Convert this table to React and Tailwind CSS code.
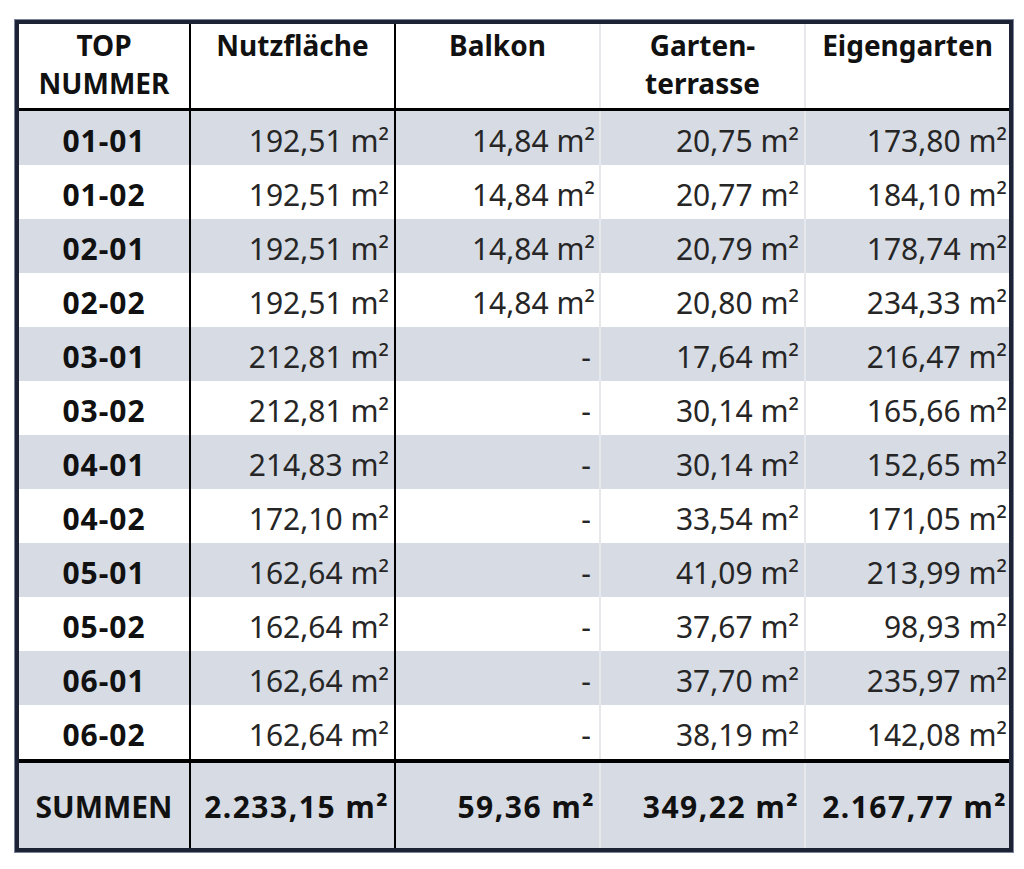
const rows = [
  ['01-01', '192,51', '14,84', '20,75', '173,80'],
  ['01-02', '192,51', '14,84', '20,77', '184,10'],
  ['02-01', '192,51', '14,84', '20,79', '178,74'],
  ['02-02', '192,51', '14,84', '20,80', '234,33'],
  ['03-01', '212,81', null, '17,64', '216,47'],
  ['03-02', '212,81', null, '30,14', '165,66'],
  ['04-01', '214,83', null, '30,14', '152,65'],
  ['04-02', '172,10', null, '33,54', '171,05'],
  ['05-01', '162,64', null, '41,09', '213,99'],
  ['05-02', '162,64', null, '37,67', '98,93'],
  ['06-01', '162,64', null, '37,70', '235,97'],
  ['06-02', '162,64', null, '38,19', '142,08'],
]

// column widths + the line on the right of each cell
const cols = [
  'w-[172px] border-r-2 border-black',
  'w-[205px] border-r-2 border-black',
  'w-[205px] border-r-2 border-[#e6e8ec]',
  'w-[205px] border-r-2 border-[#e6e8ec]',
  'w-[203px]',
]

function Value({ v }) {
  if (v === null) return <span className="pr-[4px]">-</span>
  return <span>{v} m²</span>
}

export default function App() {
  return (
    <div className="min-h-[869px] bg-white pt-[20px] pl-[15px] font-['Noto_Sans',sans-serif] text-[#262626]">
      <div className="w-[998px] border-[4px] border-[#1d2335] shadow-[0_0_0_1px_#7a849c]">
        {/* header */}
        <div className="flex h-[87px] border-b-[3px] border-black bg-white text-[28px] font-bold leading-[38px] text-[#111]">
          <div className={`${cols[0]} text-center pt-[2px]`}>TOP<br />NUMMER</div>
          <div className={`${cols[1]} text-center pt-[2px]`}>Nutzfläche</div>
          <div className={`${cols[2]} text-center pt-[2px]`}>Balkon</div>
          <div className={`${cols[3]} text-center pt-[2px]`}>Garten-<br />terrasse</div>
          <div className={`${cols[4]} text-center pt-[2px]`}>Eigengarten</div>
        </div>

        {/* rows */}
        {rows.map((r, i) => (
          <div
            key={r[0]}
            className={`flex h-[54px] text-[30px] ${i % 2 === 0 ? 'bg-[#d6dbe4]' : 'bg-white'}`}
          >
            <div className={`${cols[0]} flex items-center justify-center pt-[4px] font-bold tracking-[1px] text-[#111]`}>{r[0]}</div>
            <div className={`${cols[1]} flex items-center justify-end pt-[4px] pr-[5px]`}><Value v={r[1]} /></div>
            <div className={`${cols[2]} flex items-center justify-end pt-[4px] pr-[4px]`}><Value v={r[2]} /></div>
            <div className={`${cols[3]} flex items-center justify-end pt-[4px] pr-[5px]`}><Value v={r[3]} /></div>
            <div className={`${cols[4]} flex items-center justify-end pt-[4px] pr-[2px]`}><Value v={r[4]} /></div>
          </div>
        ))}

        {/* totals */}
        <div className="flex h-[89px] border-t-[4px] border-black bg-[#d6dbe4] text-[30px] font-bold text-[#111]">
          <div className={`${cols[0]} flex items-center justify-center pt-[2px]`}>SUMMEN</div>
          <div className={`${cols[1]} flex items-center justify-end pt-[2px] pr-[5px] tracking-[1.5px]`}><Value v="2.233,15" /></div>
          <div className={`${cols[2]} flex items-center justify-end pt-[2px] pr-[4px] tracking-[1.5px] border-[#d6dbe4]`}><Value v="59,36" /></div>
          <div className={`${cols[3]} flex items-center justify-end pt-[2px] pr-[5px] tracking-[1.5px] border-[#d6dbe4]`}><Value v="349,22" /></div>
          <div className={`${cols[4]} flex items-center justify-end pt-[2px] pr-[2px] tracking-[1.5px]`}><Value v="2.167,77" /></div>
        </div>
      </div>
    </div>
  )
}
